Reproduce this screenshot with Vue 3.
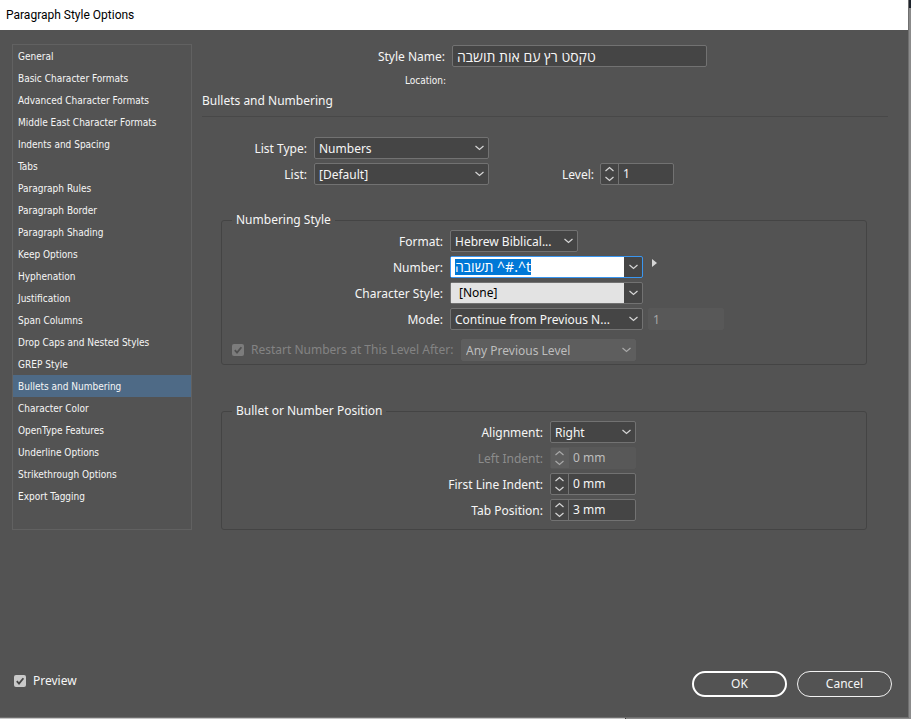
<script setup>
import { ref, onMounted } from 'vue'

const sections = [
  'General', 'Basic Character Formats', 'Advanced Character Formats',
  'Middle East Character Formats', 'Indents and Spacing', 'Tabs',
  'Paragraph Rules', 'Paragraph Border', 'Paragraph Shading', 'Keep Options',
  'Hyphenation', 'Justification', 'Span Columns', 'Drop Caps and Nested Styles',
  'GREP Style', 'Bullets and Numbering', 'Character Color', 'OpenType Features',
  'Underline Options', 'Strikethrough Options', 'Export Tagging'
]
const active = ref('Bullets and Numbering')
const styleName = ref('טקסט רץ עם אות תושבה')
const numberPattern = ref('תשובה ^#.^t')
const characterStyle = ref('[None]')
const level = ref('1')
const startAt = ref('1')
const restart = ref(true)
const preview = ref(true)
const numberInput = ref(null)

const indents = ref([
  { id: 'left-indent', label: 'Left Indent:', value: '0 mm', disabled: true },
  { id: 'first-indent', label: 'First Line Indent:', value: '0 mm', disabled: false },
  { id: 'tab-position', label: 'Tab Position:', value: '3 mm', disabled: false }
])

function step(item, delta) {
  item.value = `${parseFloat(item.value) + delta} mm`
}
function stepLevel(delta) {
  level.value = String(Math.min(9, Math.max(1, Number(level.value) + delta)))
}

onMounted(() => {
  numberInput.value.focus()
  numberInput.value.select()
})
</script>

<template>
  <div class="desktop">
    <div class="dialog">
      <header class="titlebar">Paragraph Style Options</header>

      <div class="body">
        <nav class="sidebar">
          <button
            v-for="name in sections"
            :key="name"
            type="button"
            class="nav-item"
            :class="{ active: name === active }"
            @click="active = name"
          >{{ name }}</button>
        </nav>

        <main class="panel">
          <div class="row name-row">
            <label class="label" for="style-name">Style Name:</label>
            <input id="style-name" v-model="styleName" class="field name-field" type="text">
          </div>
          <div class="row location-row"><span class="label small">Location:</span></div>
          <h1 class="heading">Bullets and Numbering</h1>

          <div class="list-rows">
            <div class="row">
              <label class="label" for="list-type">List Type:</label>
              <span class="select w-list">
                <select id="list-type"><option>Numbers</option></select>
                <svg class="chevron" viewBox="0 0 9 6"><path d="M0.5 1 4.5 4.5 8.5 1" /></svg>
              </span>
            </div>
            <div class="row">
              <label class="label" for="list">List:</label>
              <span class="select w-list">
                <select id="list"><option>[Default]</option></select>
                <svg class="chevron" viewBox="0 0 9 6"><path d="M0.5 1 4.5 4.5 8.5 1" /></svg>
              </span>
              <label class="label level-label" for="level">Level:</label>
              <span class="spinner w-level">
                <span class="steps">
                  <button type="button" aria-label="Increase level" @click="stepLevel(1)"><svg viewBox="0 0 9 6"><path d="M0.5 5 4.5 1.5 8.5 5" /></svg></button>
                  <button type="button" aria-label="Decrease level" @click="stepLevel(-1)"><svg viewBox="0 0 9 6"><path d="M0.5 1 4.5 4.5 8.5 1" /></svg></button>
                </span>
                <input id="level" v-model="level" type="text">
              </span>
            </div>
          </div>

          <fieldset class="group numbering">
            <legend>Numbering Style</legend>
            <div class="row">
              <label class="label" for="format">Format:</label>
              <span class="select w-format">
                <select id="format"><option>Hebrew Biblical...</option></select>
                <svg class="chevron" viewBox="0 0 9 6"><path d="M0.5 1 4.5 4.5 8.5 1" /></svg>
              </span>
            </div>
            <div class="row">
              <label class="label" for="number">Number:</label>
              <span class="combo focused">
                <input id="number" ref="numberInput" v-model="numberPattern" type="text">
                <button type="button" aria-label="Number presets"><svg viewBox="0 0 9 6"><path d="M0.5 1 4.5 4.5 8.5 1" /></svg></button>
              </span>
              <button type="button" class="flyout" aria-label="Insert special character"><svg viewBox="0 0 5 8"><path d="M0 0 5 4 0 8Z" /></svg></button>
            </div>
            <div class="row">
              <label class="label" for="character-style">Character Style:</label>
              <span class="combo light">
                <input id="character-style" v-model="characterStyle" type="text">
                <button type="button" aria-label="Character styles"><svg viewBox="0 0 9 6"><path d="M0.5 1 4.5 4.5 8.5 1" /></svg></button>
              </span>
            </div>
            <div class="row">
              <label class="label" for="mode">Mode:</label>
              <span class="select w-mode">
                <select id="mode"><option>Continue from Previous N...</option></select>
                <svg class="chevron" viewBox="0 0 9 6"><path d="M0.5 1 4.5 4.5 8.5 1" /></svg>
              </span>
              <input v-model="startAt" class="field start-field" type="text" aria-label="Start at" disabled>
            </div>
            <div class="row restart-row">
              <label class="check off">
                <input v-model="restart" type="checkbox" disabled>
                <svg class="box" viewBox="0 0 12 12"><rect width="12" height="12" rx="2" /><path d="M2.8 6.2 5 8.6 9.4 3.2" /></svg>
                <span>Restart Numbers at This Level After:</span>
              </label>
              <span class="select w-list off">
                <select aria-label="Restart level" disabled><option>Any Previous Level</option></select>
                <svg class="chevron" viewBox="0 0 9 6"><path d="M0.5 1 4.5 4.5 8.5 1" /></svg>
              </span>
            </div>
          </fieldset>

          <fieldset class="group position">
            <legend>Bullet or Number Position</legend>
            <div class="row">
              <label class="label" for="alignment">Alignment:</label>
              <span class="select w-indent">
                <select id="alignment"><option>Right</option></select>
                <svg class="chevron" viewBox="0 0 9 6"><path d="M0.5 1 4.5 4.5 8.5 1" /></svg>
              </span>
            </div>
            <div v-for="item in indents" :key="item.id" class="row">
              <label class="label" :class="{ dim: item.disabled }" :for="item.id">{{ item.label }}</label>
              <span class="spinner w-indent" :class="{ off: item.disabled }">
                <span class="steps">
                  <button type="button" aria-label="Increase" :disabled="item.disabled" @click="step(item, 1)"><svg viewBox="0 0 9 6"><path d="M0.5 5 4.5 1.5 8.5 5" /></svg></button>
                  <button type="button" aria-label="Decrease" :disabled="item.disabled" @click="step(item, -1)"><svg viewBox="0 0 9 6"><path d="M0.5 1 4.5 4.5 8.5 1" /></svg></button>
                </span>
                <input :id="item.id" v-model="item.value" type="text" :disabled="item.disabled">
              </span>
            </div>
          </fieldset>
        </main>
      </div>

      <footer class="footer">
        <label class="check">
          <input v-model="preview" type="checkbox">
          <svg class="box" viewBox="0 0 12 12"><rect width="12" height="12" rx="2" /><path v-if="preview" d="M2.8 6.2 5 8.6 9.4 3.2" /></svg>
          <span>Preview</span>
        </label>
        <div class="actions">
          <button type="button" class="pill primary">OK</button>
          <button type="button" class="pill">Cancel</button>
        </div>
      </footer>
    </div>
  </div>
</template>

<style>
body { margin: 0; }
</style>

<style scoped>
.desktop {
  box-sizing: border-box;
  min-height: 100vh;
  display: flex;
  padding: 0 2px 1px 0;
  background:
    linear-gradient(90deg, #c6c6c6 625px, #333 625px 626px, #8b8b8b 626px) bottom / 100% 1px no-repeat,
    linear-gradient(#1d232b 8px, #8b8b8b 8px);
  font-family: "Noto Sans", "Open Sans", sans-serif;
  font-size: 12px;
  line-height: 16px;
  color: #f6f6f6;
}
.desktop *, .desktop *::before { box-sizing: border-box; }
button, input, select { font: inherit; color: inherit; margin: 0; }
button { padding: 0; border: 0; background: none; }
svg { display: block; fill: none; stroke: #d6d6d6; stroke-width: 1.2; }

.dialog {
  flex: 1;
  display: flex;
  flex-direction: column;
  border: solid #6f6f6f;
  border-width: 0 1px 1px 0;
  background: #535353;
}
.titlebar {
  height: 30px;
  padding: 0 6px;
  background: #fff;
  color: #000;
  font-family: Roboto, "Open Sans", sans-serif;
  line-height: 30px;
}
.body {
  flex: 1;
  display: flex;
  align-items: flex-start;
  gap: 10px;
  padding: 14px 20px 0 12px;
}
.sidebar {
  flex: none;
  width: 180px;
  display: flex;
  flex-direction: column;
  padding-bottom: 22px;
  border: 1px solid #616161;
}
.nav-item {
  height: 22px;
  padding: 2px 5px 0;
  text-align: left;
  font-family: "DejaVu Sans Condensed", sans-serif;
  font-size: 10px;
}
.nav-item.active { background: #4e6a86; }

.panel { flex: 1; min-width: 0; }
.row { display: flex; align-items: center; height: 22px; }
.row + .row { margin-top: 4px; }
.label { flex: none; text-align: right; padding: 2px 7px 0 0; }
.label.dim { color: #8c8c8c; }

.name-row .label, .location-row .label { width: 250px; }
.name-row { margin-top: 1px; }
.name-row + .location-row { margin-top: 2px; }
.label.small { font-family: "DejaVu Sans Condensed", sans-serif; font-size: 10px; padding-right: 6px; }
.name-field { width: 255px; }
#style-name, #number { font-size: 14px; }
.heading {
  margin: 0;
  height: 26px;
  border-bottom: 1px solid #484848;
  font-size: 12px;
  font-weight: 400;
  line-height: 20px;
}
.list-rows { margin-top: 20px; }
.list-rows .label { width: 112px; }
.list-rows .level-label { width: 111px; padding-right: 6px; }

.field {
  height: 22px;
  padding: 0 4px;
  border: 1px solid #727272;
  border-radius: 2px;
  background: #454545;
  outline: 0;
}
.start-field {
  width: 76px;
  margin-left: 5px;
  border-color: #585858;
  background: #585858;
  color: #a6a6a6;
}
.select { position: relative; flex: none; height: 22px; }
.select select {
  appearance: none;
  width: 100%;
  height: 22px;
  padding: 2px 20px 0 4px;
  border: 1px solid #727272;
  border-radius: 2px;
  background: #454545;
  outline: 0;
}
.select.off select {
  border-color: #5e5e5e;
  background: #5e5e5e;
  color: #bdbdbd;
  opacity: 1;
}
.chevron {
  position: absolute;
  top: 8px;
  right: 5px;
  width: 9px;
  height: 6px;
  pointer-events: none;
}
.off svg { stroke: #a8a8a8; }
.w-list { width: 175px; }
.w-format { width: 128px; }
.w-mode { width: 193px; }
.w-indent { width: 86px; }
.w-level { width: 74px; }

.spinner {
  display: flex;
  flex: none;
  height: 22px;
  border: 1px solid #727272;
  border-radius: 2px;
  background: #454545;
}
.spinner input {
  flex: 1;
  min-width: 0;
  padding: 0 4px;
  border: 0;
  background: none;
  outline: 0;
}
.steps {
  width: 18px;
  display: flex;
  flex-direction: column;
  align-items: center;
  justify-content: space-between;
  padding: 2px 0;
  border-right: 1px solid #727272;
}
.steps svg { width: 9px; height: 6px; }
.spinner.off { border-color: #585858; background: #585858; color: #bdbdbd; }
.spinner.off .steps { border-color: #5e5e5e; background: #5e5e5e; }

.combo {
  display: flex;
  flex: none;
  width: 193px;
  height: 22px;
  border: 1px solid #727272;
  border-radius: 2px;
  background: #454545;
}
.combo input {
  flex: 1;
  min-width: 0;
  padding: 0 4px;
  border: 0;
  outline: 0;
  background: #fff;
  color: #000;
}
.combo input::selection { background: #0078d7; color: #fff; }
.combo button {
  display: flex;
  align-items: center;
  justify-content: center;
  width: 18px;
}
.combo button svg { width: 9px; height: 6px; }
.combo.focused { border-color: #3a96f0; }
.combo.light input { padding-left: 8px; background: #e3e3e3; }
.flyout { margin: 0 0 8px 9px; }
.flyout svg { width: 5px; height: 8px; fill: #d6d6d6; stroke: none; }

.group {
  min-width: 0;
  margin: 0 21px 0 19px;
  padding: 2px 10px 0;
  border: 1px solid #444;
  border-radius: 3px;
}
.group legend { padding: 0 4px; }
.numbering { margin-top: 27px; padding-bottom: 3px; }
.numbering .label { width: 218px; }
.position { margin-top: 38px; padding-bottom: 8px; }
.position .label { width: 318px; }

.check { display: flex; align-items: center; position: relative; }
.check input { position: absolute; opacity: 0; width: 12px; height: 12px; }
.check .box { width: 12px; height: 12px; margin-right: 7px; }
.check rect { fill: #c9c9c9; stroke: none; }
.check path { stroke: #454545; stroke-width: 1.8; }
.check.off { flex: none; width: 229px; color: #838383; white-space: nowrap; }
.check.off rect { fill: #7c7c7c; }
.check.off path { stroke: #505050; }
.numbering .restart-row { margin-top: 9px; }

.footer {
  display: flex;
  align-items: flex-start;
  justify-content: space-between;
  padding: 0 16px 20px 14px;
}
.footer .check { padding-top: 2px; }
.actions { display: flex; gap: 10px; }
.pill {
  width: 95px;
  height: 26px;
  border: 1px solid #f2f2f2;
  border-radius: 13px;
}
.pill.primary { border-width: 2px; border-color: #fff; }
</style>
